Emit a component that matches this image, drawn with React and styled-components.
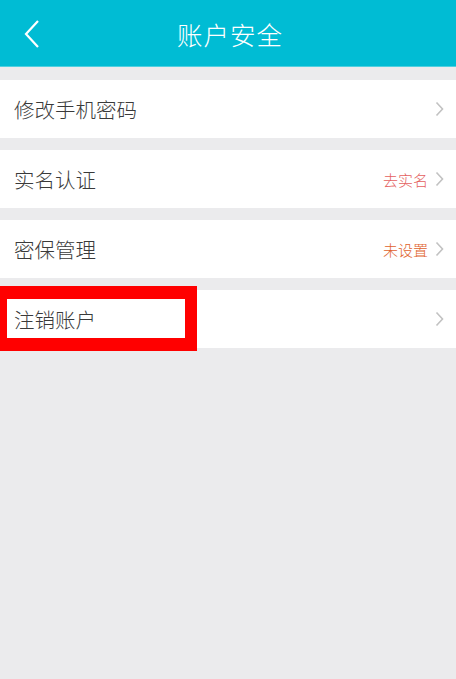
import React from "react";
import styled, { createGlobalStyle } from "styled-components";

const GlobalStyle = createGlobalStyle`
  html, body {
    margin: 0;
    padding: 0;
    background: #ebebed;
  }
  body {
    font-family: "Noto Sans CJK SC", "Noto Sans", sans-serif;
  }
`;

const Page = styled.div`
  position: relative;
  width: 456px;
  min-height: 679px;
  background: #ebebed;
`;

const TopBar = styled.header`
  position: relative;
  height: 67px;
  background: #00bcd4;
  display: flex;
  align-items: center;
  justify-content: center;
  border-bottom: 1px solid #4fd0e0;
  box-sizing: border-box;
`;

const BackButton = styled.button`
  position: absolute;
  left: 17px;
  top: 18px;
  width: 30px;
  height: 32px;
  padding: 0;
  border: 0;
  background: none;
  display: flex;
  align-items: center;
  justify-content: center;
`;

const Title = styled.h1`
  margin: 0 0 0 4px;
  color: #fff;
  font-size: 25.5px;
  font-weight: 300;
  letter-spacing: 1px;
`;

const List = styled.div`
  display: flex;
  flex-direction: column;
  gap: 12px;
  padding-top: 13px;
`;

const Row = styled.div`
  height: 58px;
  background: #fff;
  display: flex;
  align-items: center;
  padding: 0 12px 0 14px;
`;

const Label = styled.span`
  flex: 1;
  font-size: 20.5px;
  font-weight: 300;
  color: #3a3a3a;
`;

const Status = styled.span`
  font-size: 15px;
  font-weight: 300;
  color: ${(p) => p.$color};
  margin-right: 7px;
`;

const Highlight = styled.div`
  position: absolute;
  left: 0;
  top: 286px;
  width: 197px;
  height: 65px;
  box-sizing: border-box;
  border-style: solid;
  border-color: #ff0000;
  border-width: 13px 12px 13px 7px;
`;

const Chevron = () => (
  <svg width="9" height="16" viewBox="0 0 9 16">
    <path d="M1.5 1.5 L7.5 8 L1.5 14.5" fill="none" stroke="#c2c2c2" strokeWidth="1.6" />
  </svg>
);

const rows = [
  { label: "修改手机密码" },
  { label: "实名认证", status: "去实名", color: "#e4605e" },
  { label: "密保管理", status: "未设置", color: "#e0622c" },
  { label: "注销账户" },
];

export default function App() {
  return (
    <Page>
      <GlobalStyle />
      <TopBar>
        <BackButton aria-label="返回">
          <svg width="18" height="30" viewBox="0 0 18 30">
            <path d="M15 2 L3 15 L15 28" fill="none" stroke="#fff" strokeWidth="2.2" />
          </svg>
        </BackButton>
        <Title>账户安全</Title>
      </TopBar>
      <List>
        {rows.map((r) => (
          <Row key={r.label}>
            <Label>{r.label}</Label>
            {r.status && <Status $color={r.color}>{r.status}</Status>}
            <Chevron />
          </Row>
        ))}
      </List>
      <Highlight />
    </Page>
  );
}
